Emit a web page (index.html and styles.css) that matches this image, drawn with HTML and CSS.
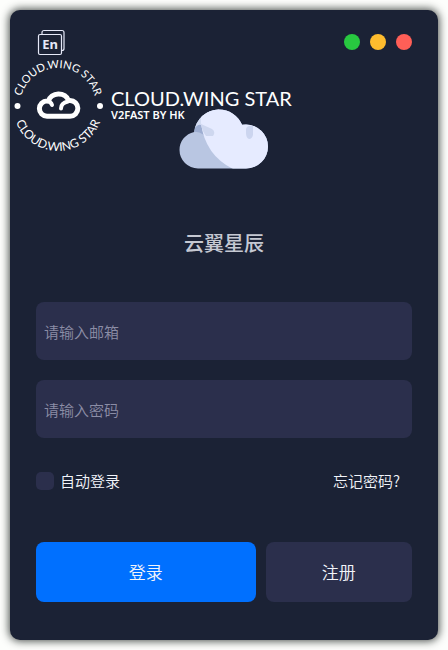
FILE: index.html
```html
<!DOCTYPE html>
<html lang="zh-CN">
<head>
<meta charset="utf-8">
<meta name="viewport" content="width=device-width, initial-scale=1">
<title>云翼星辰</title>
<link rel="stylesheet" href="styles.css">
</head>
<body>
<main class="card">
  <header class="topbar">
    <button class="lang" type="button" aria-label="English">
      <svg width="30" height="28" viewBox="0 0 30 28" fill="none" stroke="#e6e9f8" stroke-width="1.2">
        <path d="M6 6V4.500a2 2 0 0 1 2-2h18a2 2 0 0 1 2 2v16a2 2 0 0 1-2 2h-1"/>
        <rect x="2.500" y="6.500" width="23" height="20" rx="1.500"/>
        <text class="lang-text" x="14" y="21" text-anchor="middle">En</text>
      </svg>
    </button>
    <div class="window-controls">
      <button class="dot dot-green" type="button" aria-label="最大化"></button>
      <button class="dot dot-yellow" type="button" aria-label="最小化"></button>
      <button class="dot dot-red" type="button" aria-label="关闭"></button>
    </div>
  </header>

  <svg class="cloud" width="90" height="60" viewBox="0 0 90 60" aria-hidden="true">
    <defs>
      <clipPath id="cloud-shape">
        <circle cx="19" cy="41" r="18.500"/>
        <circle cx="40" cy="25.500" r="25"/>
        <circle cx="67" cy="37.500" r="22"/>
        <rect x="19" y="30" width="48" height="29.500"/>
      </clipPath>
    </defs>
    <g clip-path="url(#cloud-shape)">
      <path d="M0 0H90V60H0Z" fill="#b9c6e2"/>
      <path d="M14 0H40V24L22 16L14 19Z" fill="#d3dcf2"/>
      <path d="M14 23Q18 14 22 16L25 26Q19 22 14 23Z" fill="#9dadd1"/>
      <path d="M22 0H90V60H54Q26 46 22 14Z" fill="#e6ebff"/>
      <path d="M22 15L33 20Q37 23 34 27H27Q23 22 22 15Z" fill="#ced7ef"/>
      <path d="M67 20Q68 16 74 17V26Q73 30 70 30Q67 29 67 24Z" fill="#ccd5ef"/>
    </g>
  </svg>

  <h1 class="title">云翼星辰</h1>

  <form class="form">
    <input class="field" type="email" placeholder="请输入邮箱" aria-label="请输入邮箱">
    <input class="field" type="password" placeholder="请输入密码" aria-label="请输入密码">
    <div class="options">
      <label class="remember" for="auto"><input class="check" id="auto" type="checkbox">自动登录</label>
      <a class="forgot" href="#forgot">忘记密码?</a>
    </div>
    <div class="actions">
      <button class="btn btn-primary" type="submit">登录</button>
      <button class="btn btn-secondary" type="button">注册</button>
    </div>
  </form>

  <div class="brand">
    <svg width="96" height="96" viewBox="0 0 96 96" role="img" aria-label="CLOUD.WING STAR">
      <defs>
        <path id="arc-top" d="M10 48A38 38 0 0 1 86 48"/>
        <path id="arc-bottom" d="M3 48A45 45 0 0 0 93 48"/>
      </defs>
      <text class="ring-text" text-anchor="middle"><textPath href="#arc-top" startOffset="50%">CLOUD.WING STAR</textPath></text>
      <text class="ring-text ring-text-bottom" text-anchor="middle"><textPath href="#arc-bottom" startOffset="50%">CLOUD.WING STAR</textPath></text>
      <circle cx="7.500" cy="48" r="3" fill="#fff"/>
      <circle cx="90" cy="48" r="3" fill="#fff"/>
      <g fill="none" stroke="#fff" stroke-width="5" stroke-linecap="round" stroke-linejoin="round">
        <path d="M37 58.200A7.600 7.600 0 0 1 37 43H38.500A10.300 9 0 0 1 58.500 42.500H60A7.800 7.800 0 0 1 60 58.200Z"/>
        <path d="M37 43Q41 43.500 42 47" stroke-width="4"/>
        <path d="M51 50.500Q51 45 58 43.500" stroke-width="4"/>
      </g>
    </svg>
    <div class="brand-copy">
      <span class="brand-name">CLOUD.WING STAR</span>
      <span class="brand-sub">V2FAST BY HK</span>
    </div>
  </div>
</main>
</body>
</html>
```

FILE: styles.css
```css
* { box-sizing: border-box; }

body {
  margin: 0;
  padding: 10px;
  background: #fdfefc;
  color: #f2f4fa;
  font-family: "Noto Sans CJK SC", sans-serif;
  font-weight: 350;
}

button, input { font: inherit; color: inherit; }

.card {
  position: relative;
  padding: 16px 26px 38px;
  border-radius: 10px;
  background: #1b2235;
  box-shadow: 0 0 8px 1px rgba(20, 28, 24, 0.8);
}

.topbar {
  display: flex;
  align-items: center;
  justify-content: space-between;
  height: 32px;
}

.lang {
  display: flex;
  padding: 0;
  border: 0;
  background: none;
}

.lang-text {
  font: 700 13px "Noto Sans", sans-serif;
  fill: #e6e9f8;
  stroke: none;
}

.window-controls { display: flex; gap: 10px; }

.dot {
  width: 16px;
  height: 16px;
  padding: 0;
  border: 0;
  border-radius: 50%;
}

.dot-green { background: #28c840; }
.dot-yellow { background: #febc2e; }
.dot-red { background: #ff5f57; }

.cloud { display: block; margin: 51px auto 0; }

.title {
  margin: 58px 0 0;
  font-size: 20px;
  font-weight: 500;
  line-height: 32px;
  text-align: center;
  color: #c5c8d2;
}

.form { margin-top: 43px; }

.field {
  display: block;
  width: 100%;
  height: 58px;
  margin-bottom: 20px;
  padding: 0 8px;
  border: 0;
  border-radius: 8px;
  background: #2b2f4c;
  font-size: 15px;
}

.field::placeholder { color: #8b8da6; opacity: 1; }

.options {
  display: flex;
  align-items: center;
  justify-content: space-between;
  margin-top: 30px;
  padding-right: 12px;
  font-size: 15px;
  line-height: 26px;
}

.remember { display: flex; align-items: center; gap: 6px; }

.check {
  appearance: none;
  width: 18px;
  height: 18px;
  margin: 0;
  border-radius: 5px;
  background: #2b2f4c;
}

.check:checked { background: #0070ff; }

.forgot { color: inherit; text-decoration: none; }

.actions {
  display: grid;
  grid-template-columns: 3fr 2fr;
  gap: 10px;
  margin-top: 48px;
}

.btn {
  height: 60px;
  padding: 0 0 2px;
  border: 0;
  border-radius: 8px;
  font-size: 17px;
}

.btn-primary { background: #0070ff; }
.btn-secondary { background: #2b2f4c; }

/* Brand lockup floats over the header and the cloud. */
.brand {
  position: absolute;
  top: 48px;
  left: 0;
  display: flex;
  align-items: center;
  gap: 5px;
  color: #fff;
  pointer-events: none;
}

.ring-text { font: 11px Lato, sans-serif; fill: #fff; }
.ring-text-bottom { font-size: 12px; }

.brand-copy {
  display: flex;
  flex-direction: column;
  gap: 2px;
  padding-bottom: 2px;
  white-space: nowrap;
}

.brand-name { font: 20px/18px Lato, sans-serif; }

.brand-sub { font: 600 11px/12px "Noto Sans", sans-serif; }
```
